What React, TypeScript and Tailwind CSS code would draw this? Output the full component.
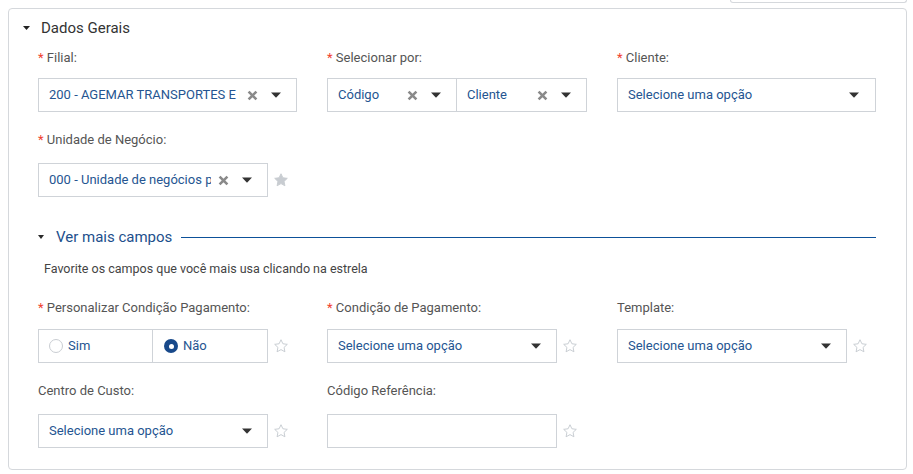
import React from 'react';

const ROBOTO = "font-['Roboto','Liberation_Sans',sans-serif]";

const Caret = ({ className = '' }: { className?: string }) => (
    <svg width="10" height="6" viewBox="0 0 10 6" className={className}>
        <path d="M0 0.5h10L5 5.8z" fill="#333" />
    </svg>
);

const Clear = () => (
    <svg width="11" height="11" viewBox="0 0 11 11" className="ml-[7px] shrink-0">
        <path d="M1.6 1.6l7.8 7.8M9.4 1.6l-7.8 7.8" stroke="#8a8a8a" strokeWidth="2.6" />
    </svg>
);

const Star = ({ filled = false }: { filled?: boolean }) => (
    <svg width="16" height="16" viewBox="0 0 24 24" className="ml-[5px] shrink-0">
        <path
            d="M12 2.6l2.85 6.05 6.6.85-4.85 4.6 1.25 6.55L12 17.4l-5.85 3.25 1.25-6.55-4.85-4.6 6.6-.85z"
            fill={filled ? '#c8ccd1' : 'none'}
            stroke={filled ? '#c8ccd1' : '#c5cad0'}
            strokeWidth="1.4"
            strokeLinejoin="round"
        />
    </svg>
);

const Label = ({ text, required = false, className = '' }: { text: string; required?: boolean; className?: string }) => (
    <div className={`h-[20px] leading-[20px] text-[13px] text-[#555] whitespace-nowrap ${className}`}>
        {required && <span className="text-[#f0412f]">* </span>}
        {text}
    </div>
);

type SelectProps = {
    value?: string;
    clearable?: boolean;
    className?: string;
};

const Select = ({ value, clearable = false, className = '' }: SelectProps) => (
    <div className={`h-[34px] flex items-center border border-[#cfd3d8] bg-white pl-[10px] pr-[15px] ${className}`}>
        <span className="flex-1 min-w-0 overflow-hidden whitespace-nowrap text-[13px] text-[#255591]">
            {value ?? 'Selecione uma opção'}
        </span>
        {clearable && <Clear />}
        <Caret className="ml-[13px] shrink-0" />
    </div>
);

const Radio = ({ label, checked = false, className = '' }: { label: string; checked?: boolean; className?: string }) => (
    <div className={`h-[34px] flex-1 flex items-center border border-[#cfd3d8] pl-[10px] ${className}`}>
        {checked ? (
            <span className="w-[14px] h-[14px] rounded-full bg-[#18498a] flex items-center justify-center">
                <span className="w-[5px] h-[5px] rounded-full bg-white" />
            </span>
        ) : (
            <span className="w-[14px] h-[14px] rounded-full border border-[#c9cdd2] bg-white" />
        )}
        <span className="ml-[5px] text-[13px] text-[#255591]">{label}</span>
    </div>
);

const Row = ({ children, className = '' }: { children: React.ReactNode; className?: string }) => (
    <div className={`grid grid-cols-[259px_260px_259px] gap-x-[30px] ${className}`}>{children}</div>
);

export default function App() {
    return (
        <div className={`${ROBOTO} bg-white w-[913px] h-[474px] overflow-hidden`}>
            <div className="h-[3px] ml-[730px] w-[177px] border-x border-b border-[#d5d8dc] rounded-b-[4px]" />

            <div className="mt-[5px] ml-[8px] w-[899px] border border-[#d5d8dc] rounded-[4px] pt-[9px] pb-[21px]">
                <div className="h-[20px] flex items-center pl-[14px]">
                    <svg width="7" height="4" viewBox="0 0 7 4">
                        <path d="M0 0h7L3.5 4z" fill="#222" />
                    </svg>
                    <span className="ml-[11px] text-[15px] leading-[20px] text-[#333]">Dados Gerais</span>
                </div>

                <div className="pl-[29px]">
                    <Row className="mt-[10px]">
                        <div>
                            <Label text="Filial:" required className="mb-[10px]" />
                            <Select value="200 - AGEMAR TRANSPORTES E EMPREENDIMENTOS LTDA" clearable />
                        </div>
                        <div>
                            <Label text="Selecionar por:" required className="mb-[10px]" />
                            <div className="flex">
                                <Select value="Código" clearable className="w-[130px]" />
                                <Select value="Cliente" clearable className="w-[130px] border-l-0" />
                            </div>
                        </div>
                        <div>
                            <Label text="Cliente:" required className="mb-[10px]" />
                            <Select className="pr-[16px]" />
                        </div>
                    </Row>

                    <Row className="mt-[18px]">
                        <div>
                            <Label text="Unidade de Negócio:" required className="mb-[13px]" />
                            <div className="flex items-center">
                                <Select value="000 - Unidade de negócios padrão" clearable className="w-[230px] pr-[14px]" />
                                <Star filled />
                            </div>
                        </div>
                    </Row>

                    <div className="mt-[30px] h-[20px] flex items-center w-[838px]">
                        <svg width="6" height="4" viewBox="0 0 6 4">
                            <path d="M0 0h6L3 4z" fill="#2a2a2a" />
                        </svg>
                        <span className="ml-[12px] text-[15px] leading-[20px] text-[#1d4f8c] whitespace-nowrap">Ver mais campos</span>
                        <div className="ml-[9px] flex-1 h-px bg-[#0d5199]" />
                    </div>

                    <div className="mt-[12px] pl-[6px] h-[20px] leading-[20px] text-[12.5px] text-[#444]">
                        Favorite os campos que você mais usa clicando na estrela
                    </div>

                    <Row className="mt-[19px]">
                        <div>
                            <Label text="Personalizar Condição Pagamento:" required className="mb-[11px]" />
                            <div className="flex items-center">
                                <div className="flex w-[230px]">
                                    <Radio label="Sim" />
                                    <Radio label="Não" checked className="border-l-0 pl-[11px]" />
                                </div>
                                <Star />
                            </div>
                        </div>
                        <div>
                            <Label text="Condição de Pagamento:" required className="mb-[11px]" />
                            <div className="flex items-center">
                                <Select className="w-[230px]" />
                                <Star />
                            </div>
                        </div>
                        <div>
                            <Label text="Template:" className="mb-[11px]" />
                            <div className="flex items-center">
                                <Select className="w-[230px]" />
                                <Star />
                            </div>
                        </div>
                    </Row>

                    <Row className="mt-[18px]">
                        <div>
                            <Label text="Centro de Custo:" className="mb-[13px]" />
                            <div className="flex items-center">
                                <Select className="w-[230px] pr-[14px]" />
                                <Star />
                            </div>
                        </div>
                        <div>
                            <Label text="Código Referência:" className="mb-[13px]" />
                            <div className="flex items-center">
                                <div className="w-[230px] h-[34px] border border-[#cfd3d8] bg-white" />
                                <Star />
                            </div>
                        </div>
                    </Row>
                </div>
            </div>
        </div>
    );
}
